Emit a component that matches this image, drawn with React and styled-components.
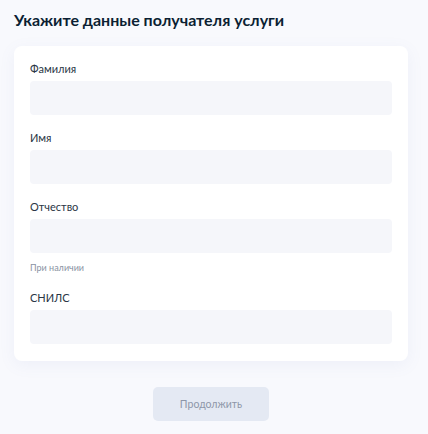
import React from "react";
import styled, { createGlobalStyle } from "styled-components";

const Global = createGlobalStyle`
  html, body { margin: 0; padding: 0; background: #f8f9fd; }
  body { font-family: Lato, "Noto Sans", sans-serif; color: #0b1f33; }
`;

const Page = styled.div`
  width: 428px;
  height: 434px;
  box-sizing: border-box;
  padding: 10px 20px 0 14px;
  display: flex;
  flex-direction: column;
`;

const Title = styled.h1`
  margin: 0;
  font-size: 16px;
  line-height: 20px;
  font-weight: 700;
  color: #0b1f33;
`;

const Card = styled.div`
  margin-top: 16px;
  background: #fff;
  border-radius: 8px;
  box-shadow: 0 4px 16px rgba(110, 130, 190, 0.08);
  padding: 16px 16px 17px 16px;
  display: flex;
  flex-direction: column;
  gap: 16px;
`;

const Field = styled.div`
  display: flex;
  flex-direction: column;
`;

const Label = styled.label`
  font-size: 11px;
  line-height: 14px;
  font-weight: 400;
  color: #2a3645;
  margin-bottom: 5px;
`;

const Input = styled.div`
  height: 34px;
  border-radius: 4px;
  background: #f5f6fa;
`;

const Hint = styled.div`
  font-size: 9px;
  line-height: 14px;
  color: #8a93a3;
  margin-top: 8px;
`;

const Footer = styled.div`
  display: flex;
  justify-content: center;
  margin-top: 26px;
`;

const Button = styled.button`
  width: 116px;
  height: 34px;
  border: none;
  border-radius: 5px;
  background: #e4e9f3;
  color: #8d96a8;
  font-family: Lato, "Noto Sans", sans-serif;
  font-size: 10.5px;
`;

const fields = [
  { label: "Фамилия" },
  { label: "Имя" },
  { label: "Отчество", hint: "При наличии" },
  { label: "СНИЛС" },
];

export default function App() {
  return (
    <>
      <Global />
      <Page>
        <Title>Укажите данные получателя услуги</Title>
        <Card>
          {fields.map((f) => (
            <Field key={f.label}>
              <Label>{f.label}</Label>
              <Input />
              {f.hint && <Hint>{f.hint}</Hint>}
            </Field>
          ))}
        </Card>
        <Footer>
          <Button disabled>Продолжить</Button>
        </Footer>
      </Page>
    </>
  );
}
